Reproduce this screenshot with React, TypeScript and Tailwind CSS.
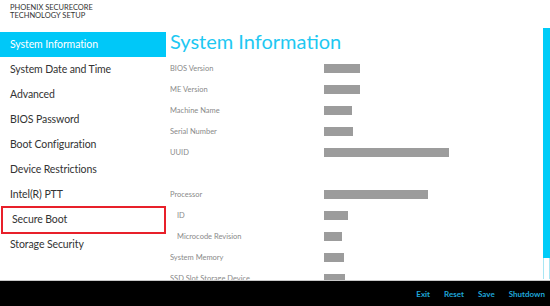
const menuItems = [
  "System Information",
  "System Date and Time",
  "Advanced",
  "BIOS Password",
  "Boot Configuration",
  "Device Restrictions",
  "Intel(R) PTT",
  "Secure Boot",
  "Storage Security",
];

interface IInfoRow {
  label: string;
  bar: string;
  indent?: boolean;
}

const infoRows: (IInfoRow | null)[] = [
  { label: "BIOS Version", bar: "w-[36px]" },
  { label: "ME Version", bar: "w-[36px]" },
  { label: "Machine Name", bar: "w-[28px]" },
  { label: "Serial Number", bar: "w-[29px]" },
  { label: "UUID", bar: "w-[125px]" },
  null,
  { label: "Processor", bar: "w-[104px]" },
  { label: "ID", bar: "w-[24px]", indent: true },
  { label: "Microcode Revision", bar: "w-[18px]", indent: true },
  { label: "System Memory", bar: "w-[20px]" },
  { label: "SSD Slot Storage Device", bar: "w-[21px]" },
];

export default function App() {
  return (
    <div className="w-[550px] h-[306px] flex flex-col bg-white font-['Lato',sans-serif] overflow-hidden">
      <div className="h-[281px] flex border-b border-[#c8c8c8]">
        <div className="w-[166px] shrink-0 flex flex-col">
          <div className="h-[32px] pl-[10px] pt-[4px] text-[7.5px] leading-[7.5px] text-[#333]">
            <div>PHOENIX SECURECORE</div>
            <div>TECHNOLOGY SETUP</div>
          </div>
          {menuItems.map((item, index) => (
            <div
              key={index}
              className={
                index === 0
                  ? "h-[25px] flex items-center pl-[10px] pt-[1px] text-[10.5px] tracking-[-0.1px] text-white bg-[#00c8f8]"
                  : index === 7
                  ? "h-[28px] -my-[1.5px] ml-[1px] flex items-center pl-[9px] pt-[1px] text-[10.5px] tracking-[-0.1px] text-[#333] border-2 border-[#e8202a]"
                  : "h-[25px] flex items-center pl-[10px] pt-[1px] text-[10.5px] tracking-[-0.1px] text-[#333]"
              }
            >
              {item}
            </div>
          ))}
        </div>

        <div className="flex-1 overflow-hidden pl-[4px] pt-[28px]">
          <div className="h-[30px] text-[20px] leading-[26px] text-[#1ec8f2]">
            System Information
          </div>
          {infoRows.map((row, rowIndex) =>
            row ? (
              <div key={rowIndex} className="h-[21px] flex items-center">
                <div
                  className={
                    row.indent
                      ? "w-[154px] pl-[7px] text-[7.5px] text-[#8a8a8a]"
                      : "w-[154px] text-[7.5px] text-[#8a8a8a]"
                  }
                >
                  {row.label}
                </div>
                <div className={row.bar + " h-[9px] bg-[#9c9c9c]"} />
              </div>
            ) : (
              <div key={rowIndex} className="h-[21px]" />
            )
          )}
        </div>

        <div className="w-[7px] shrink-0 pt-[28px] flex flex-col">
          <div className="h-[230px] bg-[#00ccf8]" />
          <div className="h-[21px] border-x border-[#a8e6f4]" />
        </div>
      </div>

      <div className="flex-1 bg-black flex items-center justify-end gap-[14px] pr-[5px] text-[8px] font-bold text-[#1fa6d8]">
        <span>Exit</span>
        <span>Reset</span>
        <span>Save</span>
        <span>Shutdown</span>
      </div>
    </div>
  );
}
